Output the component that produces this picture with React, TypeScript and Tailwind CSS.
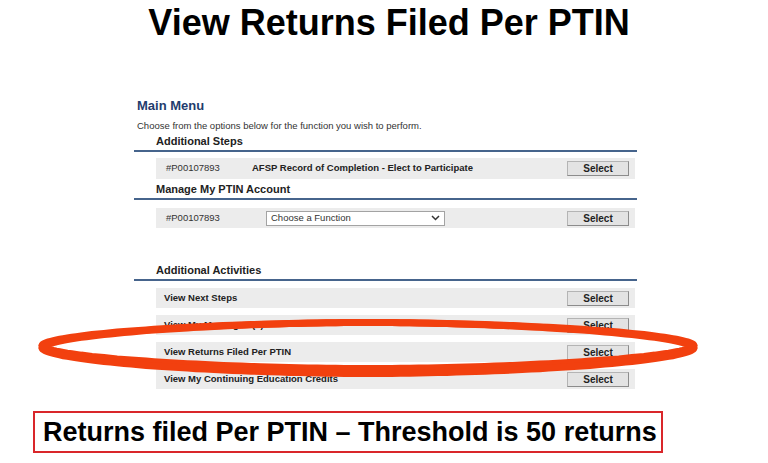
const ptin = "#P00107893";

// hand-drawn looking loop: a slightly pointed superellipse
function loop(cx: number, cy: number, rx: number, ry: number, n: number) {
  const pts: string[] = [];
  for (let i = 0; i < 200; i++) {
    const t = (i / 200) * Math.PI * 2;
    const c = Math.cos(t);
    const s = Math.sin(t);
    const x = cx + rx * Math.sign(c) * Math.pow(Math.abs(c), 2 / n);
    const y = cy + ry * Math.sign(s) * Math.pow(Math.abs(s), 2 / n);
    pts.push(`${x.toFixed(1)},${y.toFixed(1)}`);
  }
  return "M" + pts.join("L") + "Z";
}

function SelectButton() {
  return (
    <button
      type="button"
      className="w-[62px] h-[15px] shrink-0 bg-[#e3e3e3] border border-[#b4b4b4] border-r-[#8c8c8c] border-b-[#8c8c8c] text-[10px] font-bold leading-[13px] text-[#222]"
    >
      Select
    </button>
  );
}

function SectionHeader({ title, className = "" }: { title: string; className?: string }) {
  return (
    <div
      className={`pl-[22px] text-[11px] font-bold leading-[17px] text-[#222] border-b-2 border-[#46648c] ${className}`}
    >
      {title}
    </div>
  );
}

function ActivityRow({ label }: { label: string }) {
  return (
    <div className="ml-[22px] w-[479px] h-[20px] bg-[#ececec] flex items-center justify-between pl-[8px] pr-[6px]">
      <span className="text-[9.5px] font-bold text-[#222]">{label}</span>
      <SelectButton />
    </div>
  );
}

export default function App() {
  return (
    <div
      className="relative w-[768px] h-[463px] bg-white overflow-hidden"
      style={{ fontFamily: '"Liberation Sans", Arial, sans-serif' }}
    >
      <h1 className="h-[45px] leading-[45px] text-[36px] font-bold text-black text-center pl-[10px]">
        View Returns Filed Per PTIN
      </h1>

      <div className="ml-[134px] w-[503px]">
        <div className="mt-[53px] pl-[3px] text-[13px] font-bold leading-[16px] text-[#1f3c6d]">
          Main Menu
        </div>
        <div className="mt-[5px] pl-[3px] text-[9.5px] leading-[14px] text-[#333]">
          Choose from the options below for the function you wish to perform.
        </div>

        <SectionHeader title="Additional Steps" />
        <div className="mt-[6px] ml-[22px] w-[479px] h-[21px] bg-[#ececec] flex items-center pl-[10px] pr-[6px]">
          <span className="w-[86px] text-[9.5px] text-[#333]">{ptin}</span>
          <span className="flex-1 text-[9.5px] font-bold text-[#222]">
            AFSP Record of Completion - Elect to Participate
          </span>
          <SelectButton />
        </div>

        <SectionHeader title="Manage My PTIN Account" className="mt-[2px]" />
        <div className="mt-[8px] ml-[22px] w-[479px] h-[20px] bg-[#ececec] flex items-center pl-[10px] pr-[6px]">
          <span className="w-[100px] text-[9.5px] text-[#333]">{ptin}</span>
          <div className="w-[179px] h-[15px] bg-white border border-[#a3a3a3] flex items-center justify-between pl-[4px] pr-[4px]">
            <span className="text-[9.5px] text-[#333]">Choose a Function</span>
            <svg width="9" height="6" viewBox="0 0 9 6">
              <polyline points="1,1 4.5,4.5 8,1" fill="none" stroke="#333" strokeWidth="1.5" />
            </svg>
          </div>
          <div className="flex-1" />
          <SelectButton />
        </div>

        <SectionHeader title="Additional Activities" className="mt-[34px]" />
        <div className="mt-[7px] flex flex-col gap-[7px]">
          <ActivityRow label="View Next Steps" />
          <ActivityRow label="View My Messages (1)" />
          <ActivityRow label="View Returns Filed Per PTIN" />
          <ActivityRow label="View My Continuing Education Credits" />
        </div>
      </div>

      <div className="mt-[22px] ml-[33px] w-[630px] h-[42px] border-2 border-[#d9262a] flex items-center pl-[8px]">
        <span className="text-[27px] font-bold text-black leading-none">
          Returns filed Per PTIN – Threshold is 50 returns
        </span>
      </div>

      <svg
        className="absolute inset-0 pointer-events-none"
        width="768"
        height="463"
        viewBox="0 0 768 463"
      >
        <path d={loop(368, 345.5, 326, 23, 1.8)} fill="none" stroke="#f2400f" strokeWidth="7" />
        <path d={loop(368, 348, 326, 25.5, 1.8)} fill="none" stroke="#f2400f" strokeWidth="7" />
      </svg>
    </div>
  );
}
